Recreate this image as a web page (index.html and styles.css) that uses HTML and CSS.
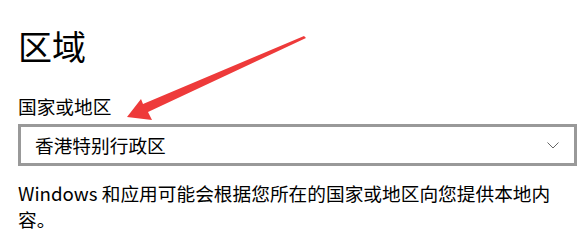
FILE: index.html
```html
<!DOCTYPE html>
<html lang="zh-CN">
<head>
  <meta charset="UTF-8">
  <meta name="viewport" content="width=device-width, initial-scale=1.0">
  <title>区域</title>
  <link rel="stylesheet" href="styles.css">
</head>
<body>
  <div class="page">
    <h1 class="title">区域</h1>
    <div class="label">国家或地区</div>
    <div class="select">
      <span class="select-value">香港特别行政区</span>
      <svg class="chevron" width="12" height="7" viewBox="0 0 12 7">
        <path d="M0.5 0.5 L6 6 L11.5 0.5" fill="none" stroke="#666" stroke-width="1"/>
      </svg>
    </div>
    <p class="desc">Windows 和应用可能会根据您所在的国家或地区向您提供本地内容。</p>
  </div>
  <svg class="arrow" width="580" height="249" viewBox="0 0 580 249">
    <polygon points="127,117 141,99 143,104 304,36 306,38 148,112 152,120" fill="#ee3a3a"/>
  </svg>
</body>
</html>
```
FILE: styles.css
```css
body {
  margin: 0;
  background: #fff;
  color: #000;
  font-family: "Noto Sans CJK SC", "Noto Sans", sans-serif;
}

.page {
  padding: 22px 0 0 18px;
}

.title {
  margin: 0;
  font-size: 34px;
  font-weight: normal;
  line-height: 48px;
}

.label {
  margin-top: 23px;
  font-size: 18.7px;
  line-height: 26px;
}

.select {
  display: flex;
  align-items: center;
  width: 559px;
  height: 42px;
  margin-top: 5px;
  border: 3px solid #999;
  box-sizing: border-box;
  padding: 0 15px 0 14px;
}

.select-value {
  flex: 1;
  font-size: 18.7px;
  line-height: 26px;
}

.desc {
  max-width: 545px;
  margin: 14px 0 0;
  font-size: 18.7px;
  line-height: 26px;
}

.arrow {
  position: absolute;
  top: 0;
  left: 0;
  pointer-events: none;
}
```
